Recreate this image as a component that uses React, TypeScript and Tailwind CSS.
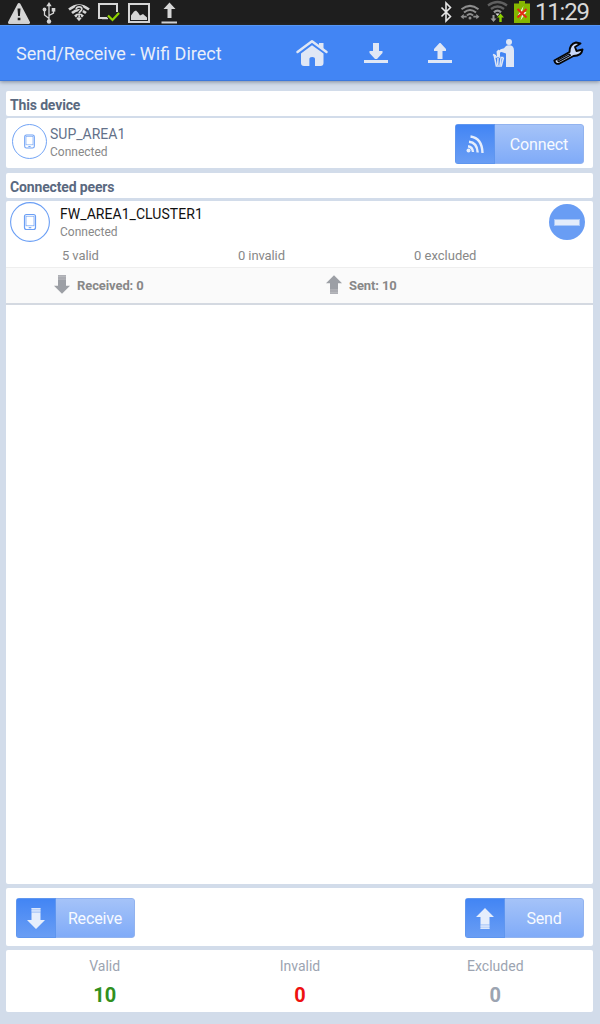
import React from "react";

function StatusBar() {
  return (
    <div className="flex h-[25px] items-start bg-[#1e1e1e]">
      <svg viewBox="8 0 22 25" className="ml-[8px] h-[25px] w-[22px] shrink-0">
        <path d="M19 4.500L28.500 22.500H9.500Z" fill="#d6d6d6" stroke="#d6d6d6" strokeWidth="3" strokeLinejoin="round" />
        <path d="M17.500 8.500h3l-.6 7.500h-1.800zM17.700 17.700h2.700v2.500h-2.700z" fill="#1e1e1e" />
      </svg>
      <svg viewBox="42 0 14 25" className="ml-[12px] h-[25px] w-[14px] shrink-0" fill="none" stroke="#d6d6d6" strokeWidth="1.300">
        <path d="M49 5V21M49 18.500L44.500 15V10M49 15.500L53.500 13V10" />
        <path d="M49 2l2.700 4.300h-5.400z" fill="#d6d6d6" stroke="none" />
        <circle cx="49" cy="21.500" r="2.200" fill="#d6d6d6" stroke="none" />
        <circle cx="44.500" cy="9.500" r="1.900" fill="#d6d6d6" stroke="none" />
        <path d="M51.700 8h3.600v3.600h-3.600z" fill="#d6d6d6" stroke="none" />
      </svg>
      <svg viewBox="68 0 22 25" className="ml-[12px] h-[25px] w-[22px] shrink-0">
        <g fill="none" stroke="#d6d6d6" strokeWidth="2.600">
          <path d="M69 9.500Q79 1.500 89 9.500M72 13Q79 7 86 13M75 16.500Q79 12.800 83 16.500" />
        </g>
        <path d="M79 21.300l-2.700-3.300q2.700-2 5.400 0z" fill="#d6d6d6" />
        <g fill="none">
          <path d="M76.200 9q.3-2.200 3-2.200 2.600 0 2.600 2.200 0 1.500-1.600 2.400-1 .7-1 2.200M79.200 15.200v2" stroke="#1e1e1e" strokeWidth="3.600" />
          <path d="M76.200 9q.3-2.200 3-2.200 2.600 0 2.600 2.200 0 1.500-1.600 2.400-1 .7-1 2.200M79.200 15.200v2" stroke="#d6d6d6" strokeWidth="1.800" />
        </g>
      </svg>
      <svg viewBox="98 0 22 25" className="ml-[8px] h-[25px] w-[22px] shrink-0" fill="none">
        <path d="M107 18H99V4H117V12" stroke="#d6d6d6" strokeWidth="2" />
        <path d="M102 18.500h6" stroke="#d6d6d6" strokeWidth="1.500" />
        <path d="M108 15.500l4.500 4.500 6.500-7" stroke="#8fd400" strokeWidth="2.200" />
      </svg>
      <svg viewBox="128 0 22 25" className="ml-[8px] h-[25px] w-[22px] shrink-0">
        <path d="M129 4h20v18h-20z" fill="none" stroke="#d6d6d6" strokeWidth="2" />
        <path d="M131 20v-4.500l3-4 2-1 2 2 2 3 3-1.500 4 3.500v2.500z" fill="#d6d6d6" />
      </svg>
      <svg viewBox="161 0 17 25" className="ml-[11px] h-[25px] w-[17px] shrink-0" fill="#d6d6d6">
        <path d="M169.500 2.500l6 6.500h-4v9h-4v-9h-4zM161.500 21.500h15.500v2h-15.500z" />
      </svg>
      <svg viewBox="440 0 13 25" className="ml-[262px] h-[25px] w-[13px] shrink-0" fill="none" stroke="#e6e6e6" strokeWidth="1.600">
        <path d="M441.500 7.500l9 9-4.500 4.500v-18l4.500 4.500-9 9" />
      </svg>
      <svg viewBox="460 0 21 25" className="ml-[7px] h-[25px] w-[21px] shrink-0" fill="none" stroke="#8e8e8e" strokeWidth="2">
        <path d="M461.500 9.300Q470 2.500 478.500 9.300M464 12.500Q470 7.500 476 12.500M467 15.500Q470 12.500 473 15.500" />
        <circle cx="470" cy="18" r="1.500" fill="#8e8e8e" stroke="none" />
        <path d="M460.500 16.700l3.200-2.600v1.700h3v1.800h-3v1.700zM479.500 16.700l-3.200-2.600v1.700h-3v1.800h3v1.700z" fill="#8e8e8e" stroke="none" />
      </svg>
      <svg viewBox="487 0 21 25" className="ml-[6px] h-[25px] w-[21px] shrink-0" fill="none" stroke="#606060" strokeWidth="2.300">
        <path d="M488 5.500Q497.500-1.500 507 5.500M491 9Q497.500 4 504 9" />
        <path d="M494 12.300Q497.500 9 501 12.300" stroke="#999" />
        <path d="M495.500 13.500h4l-2 2.500z" fill="#ddd" stroke="none" />
        <path d="M492.500 15h2v3.500h2l-3 3.500-3-3.500h2z" fill="#999" stroke="none" />
        <path d="M500.500 13.500l3.500 4h-2.300v4.500h-2.400v-4.500h-2.300z" fill="#8fd400" stroke="none" />
      </svg>
      <svg viewBox="514 0 17 25" className="ml-[6px] h-[25px] w-[17px] shrink-0">
        <path d="M514 3.500h5v-2.500h6v2.500h5v19.500h-16z" fill="#86b800" />
        <path d="M523.500 6l-5.500 9h4l-1.500 5.500 6-8.500h-4.500z" fill="#f4f4e8" />
        <path d="M517.500 9l9 8.500M526.500 9l-9 8.500" stroke="#e32b13" strokeWidth="2.200" />
      </svg>
      <span className="ml-[4px] whitespace-nowrap text-[24px] leading-[25px] tracking-[-1.2px] text-[#d8d8d8]">11:29</span>
    </div>
  );
}

function AppBar() {
  return (
    <header className="flex h-[56px] items-start border-t border-b border-t-[#5596f5] border-b-[#3b78dc] bg-[#4285f4] shadow-[0_1px_4px_rgba(60,70,90,0.55)]">
      <h1 className="ml-[16px] w-[279px] whitespace-nowrap text-[18px] leading-[56px] text-[#e9eef9]">Send/Receive - Wifi Direct</h1>
      <svg viewBox="295 26 34 54" className="h-[54px] w-[34px]" fill="#e0e7f5">
        <path d="M297.500 52L312 41.300 326.500 52" fill="none" stroke="#e0e7f5" strokeWidth="2.500" strokeLinecap="round" strokeLinejoin="round" />
        <path d="M319 43.500v-.5h4.500v6l-4.500-3.300z" />
        <path d="M301 53.500L312 45.300l11.500 8.200v9.500q0 3-3 3h-5.500v-7q0-2-2.800-2t-2.800 2v7h-5.400q-3 0-3-3z" />
      </svg>
      <svg viewBox="364 26 24 54" className="ml-[35px] h-[54px] w-[24px]" fill="#e0e7f5">
        <path d="M373 43h6v8h3.500v2l-5.500 6h-2l-5.500-6v-2h3.500zM364 60h24v3h-24z" />
      </svg>
      <svg viewBox="428 26 24 54" className="ml-[40px] h-[54px] w-[24px]" fill="#e0e7f5">
        <path d="M437.500 59h5v-8h3.500v-2l-5.500-6h-1l-5.500 6v2h3.500zM428 60h24v3h-24z" />
      </svg>
      <svg viewBox="492 26 24 54" className="ml-[40px] h-[54px] w-[24px]" fill="#e0e7f5">
        <circle cx="509" cy="42" r="3" />
        <path d="M505.500 46.500q1-1.200 3.500-1.200 5 0 5 5.200v16.500h-8v-13.500l-4.500-1.500-2.800 1-1-1.500 3-2.200 3.300-1z" />
        <path d="M494 54.500l2.300 11.500h5l2.200-8.500M493 54.500l3 1.500M498 58l-.3 7M501 58l-1 7M495.500 57.500q3-2 4.500 0M503.500 57.500h-3" fill="none" stroke="#e0e7f5" strokeWidth="1.500" />
        <path d="M497 56l-.5-4.500 2-2 1.500 2v4.500z" />
      </svg>
      <svg viewBox="552 26 32 54" className="ml-[36px] h-[54px] w-[32px]" strokeLinejoin="round">
        <path d="M554.300 60.500L569.500 52Q569.500 44 576 42.500L580.500 43.500 575 47l1.500 4 6-1.500Q581.500 56 573.500 56L559.500 63.500Q555.500 65 554.300 60.500Z" fill="#c9d8f8" stroke="#050505" strokeWidth="1.900" />
        <path d="M558 60l11-6 1.500 1.200-11.500 6.200q-1.500 0-1-1.400z" fill="#9ebcf6" stroke="#080808" strokeWidth="1.200" />
      </svg>
    </header>
  );
}

function DeviceBadge({ large = false }: { large?: boolean }) {
  return (
    <svg viewBox="0 0 40 40" className={large ? "h-[40px] w-[40px] shrink-0" : "h-[35px] w-[35px] shrink-0"} fill="none" stroke="#6b9ff5">
      <circle cx="20" cy="20" r="19.400" strokeWidth="1.100" />
      <rect x="14.500" y="12.500" width="11" height="15" rx="2" strokeWidth="1.200" />
      <rect x="16" y="14.200" width="8" height="9.600" strokeWidth=".7" />
      <path d="M18.700 25.700h2.600" strokeWidth="1.100" />
    </svg>
  );
}

function StripedArrow({ up = false, className }: { up?: boolean; className: string }) {
  return (
    <svg viewBox="0 0 18 21" className={className} fill="currentColor">
      <g transform={up ? "rotate(180 9 10.5)" : undefined}>
        <path d="M4.500 4.700h9v7.300h4.500l-9 9-9-9h4.500z" />
        <path d="M4.500 0h9v4.700h-9z" opacity=".65" />
        <path d="M4.500 0h9v1h-9zM4.500 1.800h9v1h-9zM4.500 3.400h9v.9h-9z" opacity=".8" />
      </g>
    </svg>
  );
}

function ActionButton({ icon, label, wide = false }: { icon: React.ReactNode; label: string; wide?: boolean }) {
  return (
    <button className={(wide ? "w-[129px]" : "w-[119px]") + " flex h-[40px] overflow-hidden rounded-[3px]"}>
      <span className="flex h-[40px] w-[40px] shrink-0 items-center justify-center border border-[#5f96ef] bg-linear-to-b from-[#4285f4] to-[#699df4] text-[#e6eefc]">{icon}</span>
      <span className="flex h-[40px] flex-1 items-center justify-center rounded-r-[3px] border border-l-0 border-[#92b3ef] bg-linear-to-b from-[#a5c3f8] to-[#80abf8] pt-[2px] text-[16px] tracking-[-0.15px] text-[#f7faff]">{label}</span>
    </button>
  );
}

function SectionTitle({ children }: { children: React.ReactNode }) {
  return <h2 className="h-[25px] rounded-[2px] bg-white pl-[4px] text-[14px] font-bold leading-[28px] tracking-[-0.15px] text-[#5a6980]">{children}</h2>;
}

function Total({ label, value, color }: { label: string; value: string; color: string }) {
  return (
    <div className="flex w-[196px] flex-col items-center">
      <span className="h-[32px] text-[14px] leading-[33px] text-[#9ca4b1]">{label}</span>
      <span className={"text-[20px] font-bold leading-[27px] " + color}>{value}</span>
    </div>
  );
}

export default function App() {
  return (
    <div className="flex h-[1024px] w-[600px] flex-col bg-[#d2dcea] font-[Roboto,sans-serif]">
      <StatusBar />
      <AppBar />
      <main className="flex w-[593px] flex-1 flex-col pl-[6px] pt-[10px]">
        <SectionTitle>This device</SectionTitle>
        <section className="mt-[2px] flex h-[50px] items-start rounded-[2px] bg-white pl-[6px] pt-[6px]">
          <DeviceBadge />
          <div className="ml-[3px] flex w-[405px] flex-col">
            <span className="text-[14px] leading-[21px] text-[#63718a]">SUP_AREA1</span>
            <span className="text-[12px] leading-[15px] text-[#888]">Connected</span>
          </div>
          <ActionButton
            wide
            label="Connect"
            icon={
              <svg viewBox="0 0 18 19" className="h-[19px] w-[18px]" fill="none" stroke="currentColor" strokeWidth="2.400">
                <circle cx="2.500" cy="15.500" r="2" fill="currentColor" stroke="none" />
                <path d="M2 11.300Q6.500 12 7 17M3 6.800Q11 7.500 11.700 17.500M4.500 1.500Q16 3 16.500 18" />
              </svg>
            }
          />
        </section>
        <div className="mt-[5px]"><SectionTitle>Connected peers</SectionTitle></div>
        <section className="mt-[3px] h-[683px] rounded-[2px] bg-white">
          <div className="flex h-[41px] items-start pl-[4px] pt-[1px]">
            <DeviceBadge large />
            <div className="ml-[10px] flex w-[489px] flex-col pt-[2px]">
              <span className="text-[14px] leading-[20px] tracking-[0.05px] text-[#111]">FW_AREA1_CLUSTER1</span>
              <span className="text-[12px] leading-[17px] text-[#888]">Connected</span>
            </div>
            <svg viewBox="0 0 36 36" className="mt-[2px] h-[36px] w-[36px]">
              <circle cx="18" cy="18" r="18" fill="#699df4" />
              <path d="M5 15h26v7H5z" fill="#a9c7f8" />
              <path d="M6 16h24v5H6z" fill="#e3ecfb" />
            </svg>
          </div>
          <div className="flex h-[25px] pl-[56px] text-[13px] leading-[27px] text-[#888]">
            <span className="w-[176px] tracking-[-0.1px]">5 valid</span>
            <span className="w-[176px] tracking-[-0.1px]">0 invalid</span>
            <span>0 excluded</span>
          </div>
          <div className="flex h-[38px] items-start border-t border-b-2 border-t-[#eee] border-b-[#d4d9e1] bg-[#fafafa] text-[13px] font-bold leading-[35px] tracking-[-0.1px] text-[#888]">
            <StripedArrow className="ml-[48px] mt-[7px] h-[19px] w-[16px] text-[#9c9fa5]" />
            <span className="ml-[7px] w-[249px]">Received: 0</span>
            <StripedArrow up className="mt-[7px] h-[19px] w-[16px] text-[#9c9fa5]" />
            <span className="ml-[7px]">Sent: 10</span>
          </div>
        </section>
        <section className="mt-[4px] flex h-[58px] items-start justify-between rounded-[2px] bg-white pl-[10px] pr-[9px] pt-[10px]">
          <ActionButton label="Receive" icon={<StripedArrow className="h-[21px] w-[18px]" />} />
          <ActionButton label="Send" icon={<StripedArrow up className="h-[21px] w-[18px]" />} />
        </section>
        <section className="mt-[4px] flex h-[62px] rounded-[2px] bg-white pl-[1px]">
          <Total label="Valid" value="10" color="text-[#31901e]" />
          <Total label="Invalid" value="0" color="text-[#ee1111]" />
          <Total label="Excluded" value="0" color="text-[#9ca4b1]" />
        </section>
      </main>
    </div>
  );
}
